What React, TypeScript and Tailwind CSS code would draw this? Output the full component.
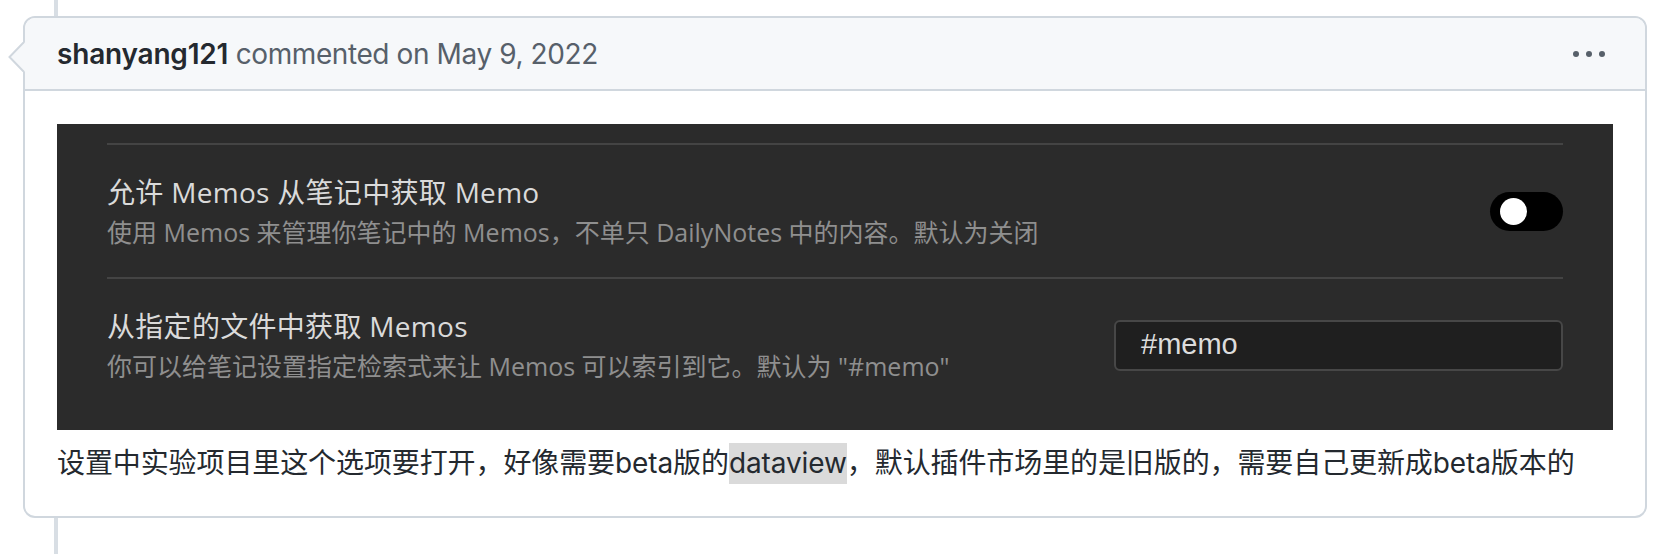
import type { JSX } from "react";

type SettingRowProps = {
    readonly title: string;
    readonly desc: string;
    readonly control: JSX.Element;
};

const SettingRow = ({ title, desc, control }: SettingRowProps): JSX.Element => (
    <div className="flex h-[132px] items-center justify-between">
        <div className="mt-[2px] flex flex-col">
            <p className="text-[28px] leading-[40px] tracking-[0.3px] text-[#dadada]">{title}</p>
            <p className="text-[25px] leading-[40px] text-[#8f8f8f]">{desc}</p>
        </div>
        {control}
    </div>
);

const Toggle = (): JSX.Element => (
    <div className="flex h-[39px] w-[73px] items-center rounded-full bg-black pl-[10px]">
        <div className="h-[27px] w-[27px] rounded-full bg-white" />
    </div>
);

const TextBox = (): JSX.Element => (
    <div className="flex h-[51px] w-[449px] items-center rounded-[6px] border-2 border-[#474747] bg-[#1f1f1f] pl-[25px] font-['Liberation_Sans',sans-serif] text-[29px] text-[#dcdcdc]">
        #memo
    </div>
);

export default function App(): JSX.Element {
    return (
        <div className="flex h-[554px] w-[1674px] flex-col bg-white font-['Inter','Noto_Sans_CJK_SC',sans-serif]">
            <div className="ml-[54px] h-[16px] w-[4px] bg-[#d8dee4]" />

            <div className="relative ml-[23px] w-[1624px] rounded-[12px] border-2 border-[#d0d7de] bg-white">
                <svg className="absolute left-[-17px] top-[24px]" width="17" height="30" viewBox="0 0 17 30">
                    <polygon points="17,0 1,15 17,30" fill="#f6f8fa" />
                    <polyline points="16,0 1.5,15 16,30" fill="none" stroke="#d0d7de" strokeWidth="2" />
                </svg>

                <div className="flex h-[73px] items-center justify-between rounded-t-[10px] border-b-2 border-[#d0d7de] bg-[#f6f8fa] pl-[32px] pr-[40px] text-[28px]">
                    <p>
                        <span className="font-semibold tracking-[-0.2px] text-[#24292f]">shanyang121</span>
                        <span className="tracking-[-0.4px] text-[#57606a]"> commented on May 9, 2022</span>
                    </p>
                    <div className="flex gap-[7px]">
                        <div className="h-[6px] w-[6px] rounded-full bg-[#57606a]" />
                        <div className="h-[6px] w-[6px] rounded-full bg-[#57606a]" />
                        <div className="h-[6px] w-[6px] rounded-full bg-[#57606a]" />
                    </div>
                </div>

                <div className="flex flex-col px-[32px] pb-[32px] pt-[33px]">
                    <div className="flex h-[306px] flex-col bg-[#2b2b2b] px-[50px] py-[19px] font-['Open_Sans','Noto_Sans_CJK_SC',sans-serif]">
                        <div className="h-[2px] bg-[#444444]" />
                        <SettingRow
                            title="允许 Memos 从笔记中获取 Memo"
                            desc="使用 Memos 来管理你笔记中的 Memos，不单只 DailyNotes 中的内容。默认为关闭"
                            control={<Toggle />}
                        />
                        <div className="h-[2px] bg-[#444444]" />
                        <SettingRow
                            title="从指定的文件中获取 Memos"
                            desc='你可以给笔记设置指定检索式来让 Memos 可以索引到它。默认为 "#memo"'
                            control={<TextBox />}
                        />
                    </div>
                    <p className="mt-[12px] text-[28px] leading-[42px] tracking-[-0.1px] text-[#24292f]">
                        设置中实验项目里这个选项要打开，好像需要beta版的<span className="inline-block bg-[#dadada] leading-[41px]">dataview</span>，默认插件市场里的是旧版的，需要自己更新成beta版本的
                    </p>
                </div>
            </div>

            <div className="ml-[54px] w-[4px] flex-1 bg-[#d8dee4]" />
        </div>
    );
}
